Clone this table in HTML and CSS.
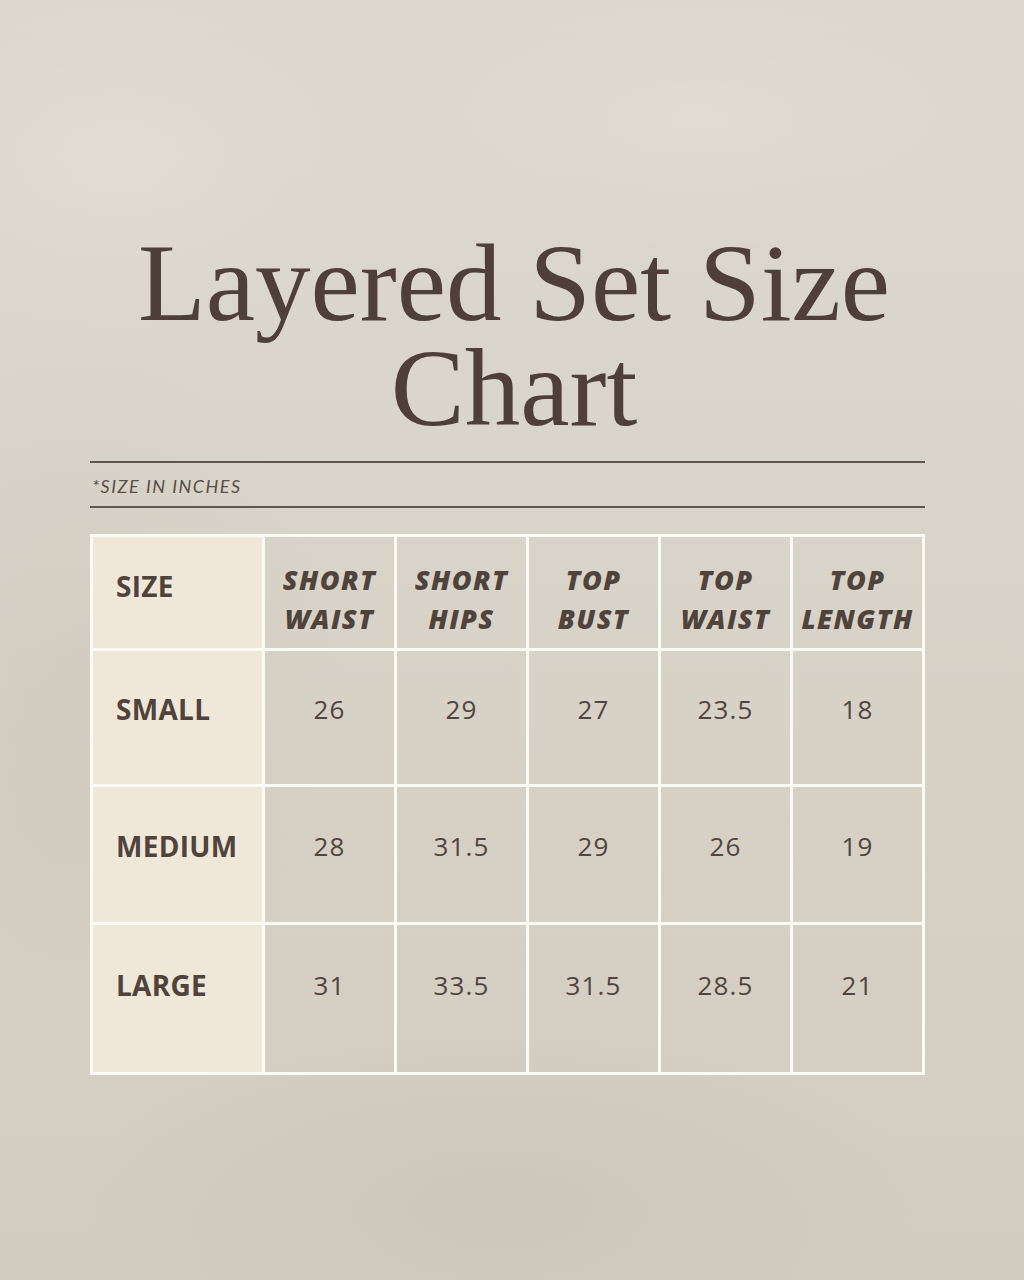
FILE: index.html
```html
<!DOCTYPE html>
<html lang="en">
<head>
<meta charset="utf-8">
<title>Layered Set Size Chart</title>
<link rel="stylesheet" href="styles.css">
</head>
<body>
<div class="page">
  <h1 class="title"><span class="title-line">Layered Set Size</span><span class="title-line">Chart</span></h1>
  <div class="note"><span>*SIZE IN INCHES</span></div>
  <div class="chart">
    <div class="cell label head-label">SIZE</div>
    <div class="cell head">SHORT<br>WAIST</div>
    <div class="cell head">SHORT<br>HIPS</div>
    <div class="cell head">TOP<br>BUST</div>
    <div class="cell head">TOP<br>WAIST</div>
    <div class="cell head">TOP<br>LENGTH</div>

    <div class="cell label r-small">SMALL</div>
    <div class="cell num r-small">26</div>
    <div class="cell num r-small">29</div>
    <div class="cell num r-small">27</div>
    <div class="cell num r-small">23.5</div>
    <div class="cell num r-small">18</div>

    <div class="cell label r-medium">MEDIUM</div>
    <div class="cell num r-medium">28</div>
    <div class="cell num r-medium">31.5</div>
    <div class="cell num r-medium">29</div>
    <div class="cell num r-medium">26</div>
    <div class="cell num r-medium">19</div>

    <div class="cell label r-large">LARGE</div>
    <div class="cell num r-large">31</div>
    <div class="cell num r-large">33.5</div>
    <div class="cell num r-large">31.5</div>
    <div class="cell num r-large">28.5</div>
    <div class="cell num r-large">21</div>
  </div>
</div>
</body>
</html>
```
FILE: styles.css
```css
html, body {
  margin: 0;
  padding: 0;
}

body {
  background: #d8d2c7;
}

.page {
  width: 1024px;
  height: 1280px;
  box-sizing: border-box;
  padding-top: 230px;
  overflow: hidden;
  background:
    radial-gradient(ellipse 420px 260px at 120px 160px, rgba(255,255,255,0.14), rgba(255,255,255,0) 70%),
    radial-gradient(ellipse 500px 200px at 700px 120px, rgba(255,255,255,0.12), rgba(255,255,255,0) 70%),
    radial-gradient(ellipse 380px 500px at 80px 700px, rgba(160,150,135,0.10), rgba(160,150,135,0) 70%),
    radial-gradient(ellipse 600px 260px at 500px 1200px, rgba(150,140,125,0.10), rgba(150,140,125,0) 70%),
    linear-gradient(180deg, #ddd8ce 0%, #dad5ca 35%, #d6d0c5 65%, #d2ccc1 100%);
}

.title {
  margin: 0;
  font-family: "Liberation Serif", "DejaVu Serif", serif;
  font-weight: 400;
  font-size: 111px;
  text-align: center;
  color: #4e4038;
  padding-left: 4px;
}

.title-line {
  display: block;
  height: 105px;
  line-height: 105px;
}

.note {
  margin: 21px 0 0 90px;
  width: 835px;
  height: 43px;
  border-top: 2px solid #62574e;
  border-bottom: 2px solid #62574e;
  display: flex;
  align-items: center;
}

.note span {
  font-family: Lato, "Open Sans", sans-serif;
  font-style: italic;
  font-weight: 400;
  font-size: 18px;
  letter-spacing: 1.5px;
  color: #5a4f47;
  padding-left: 2px;
  padding-top: 2px;
}

.chart {
  margin: 26px 0 0 90px;
  display: grid;
  grid-template-columns: 172px repeat(5, 132px);
  grid-template-rows: 114px 136px 138px 150px;
  width: max-content;
  border-top: 3px solid #fcfaf5;
  border-left: 3px solid #fcfaf5;
}

.cell {
  box-sizing: border-box;
  border-right: 3px solid #fcfaf5;
  border-bottom: 3px solid #fcfaf5;
  display: flex;
  align-items: center;
  justify-content: center;
  text-align: center;
  color: #4f433b;
  font-family: "Open Sans", "Noto Sans", sans-serif;
}

.label {
  background: #efe7d8;
  justify-content: flex-start;
  padding-left: 23px;
  font-weight: 700;
  font-size: 28px;
  line-height: 1.2;
  letter-spacing: 0.3px;
}

.head {
  font-weight: 800;
  font-style: italic;
  font-size: 27px;
  line-height: 39px;
  letter-spacing: 1.4px;
  padding-top: 12px;
}

.head-label {
  padding-bottom: 12px;
}

.num {
  font-weight: 400;
  font-size: 26px;
  line-height: 1.2;
  letter-spacing: 1.2px;
  color: #51463f;
}

.r-small {
  padding-bottom: 15px;
}

.r-medium {
  padding-bottom: 16px;
}

.r-large {
  padding-bottom: 26px;
}
```
